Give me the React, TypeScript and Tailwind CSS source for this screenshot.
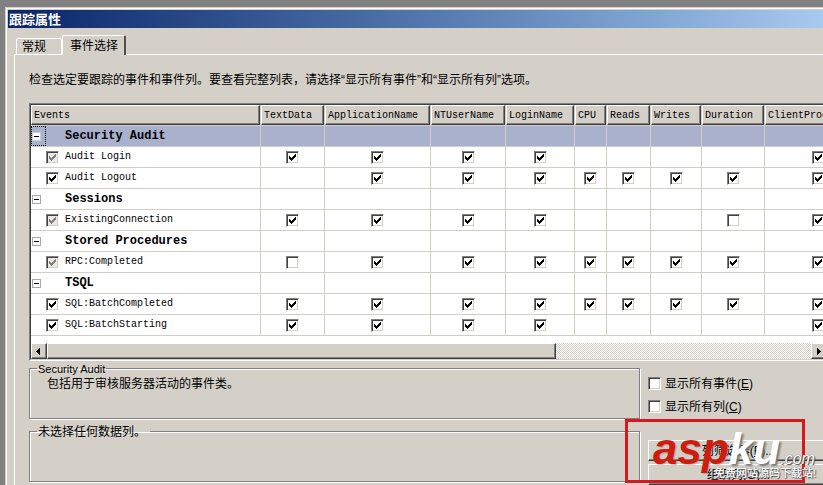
import React from "react";

type Mark = boolean | null;

interface Row {
  name: string;
  group?: boolean;
  selected?: boolean;
  partial?: boolean;
  marks?: string;
}

const columns = [
  { name: "TextData", width: "w-[64px]" },
  { name: "ApplicationName", width: "w-[106px]" },
  { name: "NTUserName", width: "w-[75px]" },
  { name: "LoginName", width: "w-[69px]" },
  { name: "CPU", width: "w-[32px]" },
  { name: "Reads", width: "w-[44px]" },
  { name: "Writes", width: "w-[51px]" },
  { name: "Duration", width: "w-[63px]" },
  { name: "ClientProcessID", width: "w-[107px]" },
];

// One character per column: x = ticked, o = clear, - = not available
const rows: Row[] = [
  { name: "Security Audit", group: true, selected: true },
  { name: "Audit Login", partial: true, marks: "xxxx----x" },
  { name: "Audit Logout", marks: "-xxxxxxxx" },
  { name: "Sessions", group: true },
  { name: "ExistingConnection", partial: true, marks: "xxxx---ox" },
  { name: "Stored Procedures", group: true },
  { name: "RPC:Completed", partial: true, marks: "oxxxxxxxx" },
  { name: "TSQL", group: true },
  { name: "SQL:BatchCompleted", marks: "xxxxxxxxx" },
  { name: "SQL:BatchStarting", marks: "xxxx----x" },
];

function markAt(row: Row, index: number): Mark {
  const c = row.marks ? row.marks[index] : "-";
  return c === "-" ? null : c === "x";
}

function Check({ id, label, checked = false, partial = false }: { id?: string; label?: string; checked?: boolean; partial?: boolean }) {
  return (
    <span className="relative block size-[13px] shrink-0">
      <input
        id={id}
        type="checkbox"
        aria-label={label}
        defaultChecked={checked}
        className={
          "peer block size-[13px] appearance-none border border-t-[#808080] border-l-[#808080] border-r-white border-b-white shadow-[inset_1px_1px_0_#404040,inset_-1px_-1px_0_#d4d0c8] " +
          (partial ? "bg-[#ebe9e5]" : "bg-white")
        }
      />
      <svg
        viewBox="0 0 13 13"
        shapeRendering="crispEdges"
        className={"pointer-events-none absolute inset-0 hidden size-[13px] peer-checked:block " + (partial ? "text-[#808080]" : "text-black")}
      >
        <path
          fill="currentColor"
          d="M3 5h1v3H3zM4 6h1v3H4zM5 7h1v3H5zM6 6h1v3H6zM7 5h1v3H7zM8 4h1v3H8zM9 3h1v3H9z"
        />
      </svg>
    </span>
  );
}

function HeaderCell({ name }: { name: string }) {
  return (
    <div className="h-5 overflow-hidden border border-t-white border-l-white border-r-[#404040] border-b-[#404040] bg-[#d4d0c8] pl-0.5 text-left leading-5 shadow-[inset_-1px_-1px_0_#808080]">
      {name}
    </div>
  );
}

function EventsTable() {
  return (
    <table className="w-[841px] table-fixed border-separate border-spacing-0 font-['Liberation_Mono','Noto_Sans_CJK_SC',monospace] text-[10px] text-black">
      <thead>
        <tr className="h-[21px]">
          <th className="w-[230px] border-r border-b border-[#d0cec6] p-0 font-normal">
            <HeaderCell name="Events" />
          </th>
          {columns.map((c) => (
            <th key={c.name} className={"border-r border-b border-[#d0cec6] p-0 font-normal " + c.width}>
              <HeaderCell name={c.name} />
            </th>
          ))}
        </tr>
      </thead>
      <tbody>
        {rows.map((row) => (
          <tr key={row.name} className={"h-[21px] " + (row.selected ? "bg-[#a9b1cc]" : "bg-white")}>
            <td className="border-r border-b border-[#d0cec6] p-0">
              <div className="flex h-5 items-center">
                <div className={"flex h-5 w-[15px] items-center pl-px " + (row.selected ? "outline-1 -outline-offset-1 outline-dotted outline-black" : "")}>
                  {row.group && (
                    <button
                      aria-label={"Collapse " + row.name}
                      className={"flex size-[9px] items-center justify-center border bg-white " + (row.selected ? "border-[#c8ccdc]" : "border-[#a8a8a8]")}
                    >
                      <span className="h-px w-[5px] bg-black" />
                    </button>
                  )}
                </div>
                <div className="w-[19px]">
                  {!row.group && <Check label={row.name} checked partial={row.partial} />}
                </div>
                <span className={"leading-5 " + (row.group ? "text-[12px] font-bold" : "")}>{row.name}</span>
              </div>
            </td>
            {columns.map((c, i) => {
              const mark = markAt(row, i);
              return (
                <td key={c.name} className="border-r border-b border-[#d0cec6] p-0">
                  {mark !== null && (
                    <div className="flex justify-center">
                      <Check label={row.name + " " + c.name} checked={mark} />
                    </div>
                  )}
                </td>
              );
            })}
          </tr>
        ))}
      </tbody>
    </table>
  );
}

const raised =
  "border border-t-white border-l-white border-r-[#404040] border-b-[#404040] bg-[#d4d0c8] shadow-[inset_-1px_-1px_0_#808080]";

function ScrollBar() {
  return (
    <div className="flex h-4 bg-[repeating-conic-gradient(#ffffff_0_25%,#d4d0c8_0_50%)] bg-size-[2px_2px]">
      <button aria-label="Scroll left" className={"flex w-4 items-center pl-1 " + raised}>
        <svg viewBox="0 0 4 7" shapeRendering="crispEdges" className="h-[7px] w-1">
          <path d="M0 3h1v1H0zM1 2h1v3H1zM2 1h1v5H2zM3 0h1v7H3z" />
        </svg>
      </button>
      <div className={"w-[509px] " + raised} />
      <div className="flex-1" />
      <button aria-label="Scroll right" className={"flex w-4 items-center pl-[5px] " + raised}>
        <svg viewBox="0 0 4 7" shapeRendering="crispEdges" className="h-[7px] w-1">
          <path d="M0 0h1v7H0zM1 1h1v5H1zM2 2h1v3H2zM3 3h1v1H3z" />
        </svg>
      </button>
    </div>
  );
}

function GroupBox({ title, small = false, children }: { title: string; small?: boolean; children?: React.ReactNode }) {
  return (
    <fieldset className="h-[58px] min-w-0 border border-[#808080] px-[7px] shadow-[inset_1px_1px_0_#fff,1px_1px_0_#fff]">
      <legend className={"h-[14px] px-px " + (small ? "text-[11px] leading-4" : "pr-1 leading-4")}>{title}</legend>
      {children}
    </fieldset>
  );
}

function Option({ id, text, hotkey }: { id: string; text: string; hotkey: string }) {
  return (
    <div className="flex h-[23px] items-center gap-1">
      <Check id={id} />
      <label htmlFor={id} className="leading-4">
        {text}(<u>{hotkey}</u>)
      </label>
    </div>
  );
}

function Watermark() {
  return (
    <div className="pointer-events-none absolute top-[419px] left-[625px] h-[64px] w-[180px] border-3 border-[#d8181c]">
      <div className="absolute top-[5px] left-[25px] flex items-baseline italic">
        <span className="text-[44px] leading-[44px] font-bold text-[#d01c10] [text-shadow:1px_1px_1px_#80808080]">asp</span>
        <span className="text-[44px] leading-[44px] font-bold text-white [text-shadow:2px_2px_2px_#777]">ku</span>
        <span className="text-[16px] text-white [text-shadow:1px_1px_1px_#444,0_0_1px_#666]">.com</span>
      </div>
      <div className="absolute top-[43px] left-[86px] text-[11px] leading-4 font-medium whitespace-nowrap text-white [text-shadow:1px_1px_1px_#555,0_0_1px_#777]">
        免费网站源码下载站!
      </div>
    </div>
  );
}

export default function App() {
  return (
    <div className="relative h-screen overflow-hidden bg-[#808080] pt-[7px] pl-[5px] font-['Liberation_Sans','Noto_Sans_CJK_SC',sans-serif] text-[12px] text-black">
      <div className="h-full border-t border-l border-[#d4d0c8]">
        <div className="h-full border-t border-l border-white bg-[#d4d0c8] pt-px pl-px">
          <h1 className="h-[18px] bg-linear-to-r from-[#0a246a] to-[#a6caf0] pl-px text-[13px] leading-5 font-bold text-white">
            跟踪属性
          </h1>
          <div className="pt-[7px] pl-1.5">
            <div role="tablist" className="flex items-end pl-0.5">
              <button role="tab" aria-selected="false" className="h-4 w-[46px] rounded-t-xs border-t border-l border-r border-white pl-[5px] text-left leading-4">
                常规
              </button>
              <button
                role="tab"
                aria-selected="true"
                className="z-10 -mb-px h-5 w-16 rounded-t-xs border-t border-l border-t-white border-l-white border-r-2 border-r-[#505050] bg-[#d4d0c8] pl-[7px] text-left leading-[18px]"
              >
                事件选择
              </button>
            </div>
            <div className="h-screen border-t border-l border-white pt-[15px] pl-3.5">
              <p className="h-[33px] leading-5 whitespace-nowrap">
                检查选定要跟踪的事件和事件列。要查看完整列表，请选择“显示所有事件”和“显示所有列”选项。
              </p>
              <div className="-mr-1.5">
                <div className="border border-t-[#808080] border-l-[#808080] border-r-white border-b-white">
                  <div className="border border-t-[#404040] border-l-[#404040] border-r-[#d4d0c8] border-b-[#d4d0c8] bg-white">
                    <div className="overflow-hidden pb-[7px]">
                      <EventsTable />
                    </div>
                    <ScrollBar />
                  </div>
                </div>
                <div className="flex gap-2">
                  <div className="flex min-w-0 flex-1 flex-col gap-[5px]">
                    <GroupBox title="Security Audit" small>
                      <p className="pl-2.5 leading-[18px]">包括用于审核服务器活动的事件类。</p>
                    </GroupBox>
                    <GroupBox title="未选择任何数据列。" />
                  </div>
                  <div className="w-[181px] pt-[11px]">
                    <Option id="all-events" text="显示所有事件" hotkey="E" />
                    <Option id="all-columns" text="显示所有列" hotkey="C" />
                    <div className="flex flex-col gap-[3px] pt-[22px]">
                      <button className={"h-[21px] leading-[18px] " + raised}>
                        列筛选器(<u>F</u>)...
                      </button>
                      <button className={"h-[21px] leading-[18px] " + raised}>
                        组织列(<u>O</u>)...
                      </button>
                    </div>
                  </div>
                </div>
              </div>
            </div>
          </div>
        </div>
      </div>
      <Watermark />
    </div>
  );
}
